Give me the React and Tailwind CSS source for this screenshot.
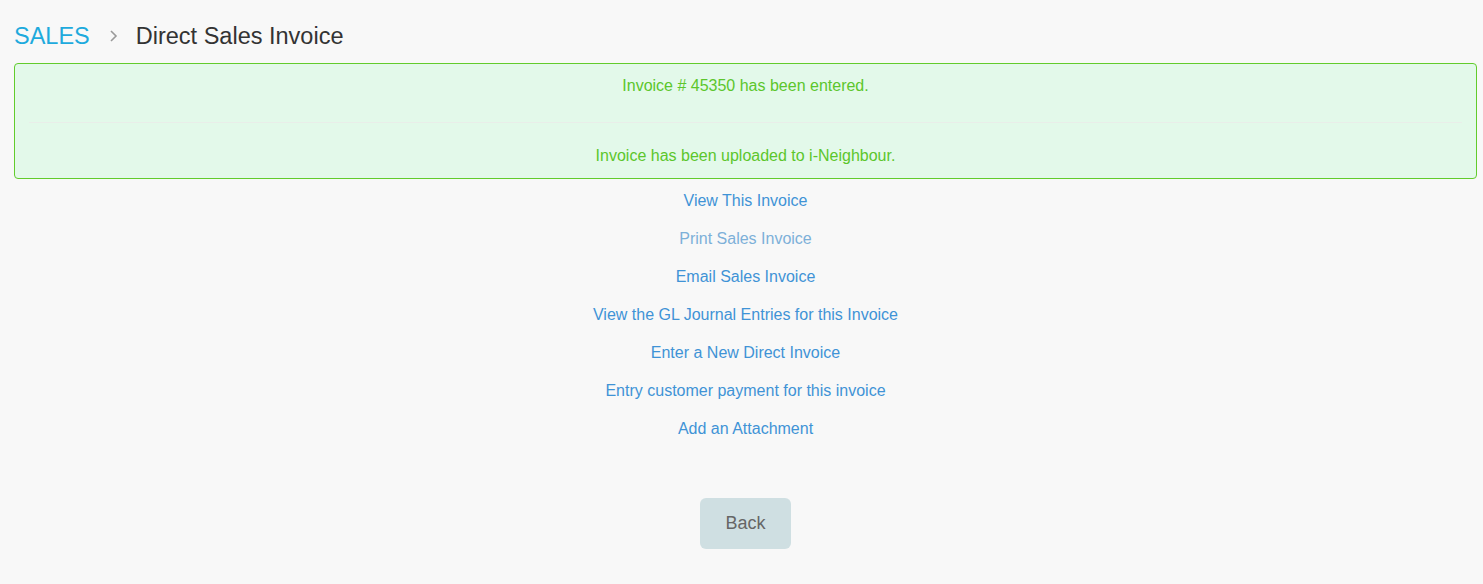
export default function App() {
  const links = [
    { t: "View This Invoice", c: "text-[#3f93d6]" },
    { t: "Print Sales Invoice", c: "text-[#7db0d8]" },
    { t: "Email Sales Invoice", c: "text-[#3f93d6]" },
    { t: "View the GL Journal Entries for this Invoice", c: "text-[#3f93d6]" },
    { t: "Enter a New Direct Invoice", c: "text-[#3f93d6]" },
    { t: "Entry customer payment for this invoice", c: "text-[#3f93d6]" },
    { t: "Add an Attachment", c: "text-[#3f93d6]" },
  ];
  return (
    <div className="min-h-[584px] bg-[#f8f8f8] pl-[14px] pr-[6px] pt-[22px] font-['Liberation_Sans',Arial,sans-serif]">
      <div className="flex items-center h-[28px] text-[23.5px] leading-[28px]">
        <span className="text-[#1eaadd]">SALES</span>
        <svg className="ml-[19px] mr-[17px]" width="10" height="14" viewBox="0 0 10 14">
          <polyline points="2,2 7,7 2,12" fill="none" stroke="#9a9a9a" strokeWidth="1.6" />
        </svg>
        <span className="text-[#333333]">Direct Sales Invoice</span>
      </div>
      <div className="mt-[13px] border border-[#62cc2c] bg-[#e3f9ea] rounded-[4px] px-[14px] pt-[11px] pb-[11px] text-center text-[16px] leading-[22px] text-[#5cc62c]">
        <div>Invoice # 45350 has been entered.</div>
        <div className="mt-[25px] border-t border-[#e9eee9]" />
        <div className="mt-[22px]">Invoice has been uploaded to i-Neighbour.</div>
      </div>
      <div className="mt-[3px] flex flex-col items-center text-[16px] leading-[38px]">
        {links.map((l) => (
          <a key={l.t} className={l.c + " cursor-pointer"}>{l.t}</a>
        ))}
      </div>
      <div className="mt-[50px] flex justify-center">
        <button className="w-[91px] h-[51px] rounded-[6px] bg-[#cfdfe2] text-[#666666] text-[18px]">Back</button>
      </div>
    </div>
  );
}
